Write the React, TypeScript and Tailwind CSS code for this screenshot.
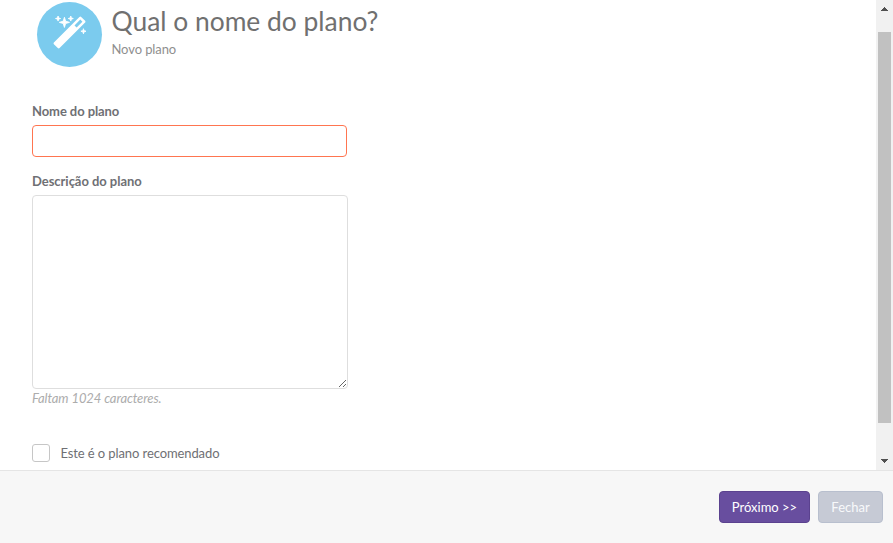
import { useState } from 'react';

const MAX_LENGTH = 1024;

function MagicIcon() {
  return (
    <svg viewBox="0 0 1664 1664" className="w-[33px] h-[33px] fill-white">
      <g transform="translate(0 1536) scale(1 -1)">
        <path d="M1190 955l293 293l-107 107l-293 -293zM1637 1248q0 -27 -18 -45l-1286 -1286q-18 -18 -45 -18t-45 18l-198 198q-18 18 -18 45t18 45l1286 1286q18 18 45 18t45 -18l198 -198q18 -18 18 -45z" />
        <path
          className="stroke-white stroke-[44]"
          d="M286 1438l98 -30l-98 -30l-30 -98l-30 98l-98 30l98 30l30 98zM636 1276l196 -60l-196 -60l-60 -196l-60 196l-196 60l196 60l60 196zM1566 798l98 -30l-98 -30l-30 -98l-30 98l-98 30l98 30l30 98zM926 1438l98 -30l-98 -30l-30 -98l-30 98l-98 30l98 30l30 98z"
        />
      </g>
    </svg>
  );
}

function Scrollbar() {
  return (
    <div className="w-[17px] h-full bg-[#f1f1f1] flex flex-col items-center shrink-0">
      <svg viewBox="0 0 7 4" className="w-[7px] h-1 mt-[7px] fill-[#505050]" shapeRendering="crispEdges">
        <path d="M3 0h1v1h1v1h1v1h1v1H0V3h1V2h1V1h1z" />
      </svg>
      <div className="w-[13px] h-[391px] mt-[21px] bg-[#c1c1c1]" />
      <svg viewBox="0 0 7 4" className="w-[7px] h-1 mt-9 fill-[#505050]" shapeRendering="crispEdges">
        <path d="M0 0h7v1H6v1H5v1H4v1H3V3H2V2H1V1H0z" />
      </svg>
    </div>
  );
}

export default function App() {
  const [name, setName] = useState('');
  const [description, setDescription] = useState('');
  const [recommended, setRecommended] = useState(false);

  return (
    <div className="w-[893px] h-[543px] flex flex-col overflow-hidden bg-white font-['Lato',sans-serif] text-[13px] text-[#6f7074]">
      <div className="h-[470px] flex shrink-0">
        <div className="flex-1 pl-8 overflow-hidden">
          <div className="flex pl-[5px] pt-0.5">
            <div className="w-[65px] h-[65px] rounded-full bg-[#7bcbee] flex items-center justify-center shrink-0">
              <div className="-mt-1">
                <MagicIcon />
              </div>
            </div>
            <div className="ml-[9.5px]">
              <h1 className="text-[26.4px] leading-[38px] text-[#707070]">Qual o nome do plano?</h1>
              <p className="leading-[18px] tracking-[-0.1px] text-[#8f8f8f]">Novo plano</p>
            </div>
          </div>

          <form className="mt-[35px] flex flex-col items-start">
            <label htmlFor="name" className="font-bold leading-[18px] tracking-[-0.08px]">Nome do plano</label>
            <input
              id="name"
              value={name}
              onChange={(e) => setName(e.target.value)}
              className="w-[315px] h-8 mt-[5px] px-3 border border-[#ff7550] rounded outline-none"
            />

            <label htmlFor="description" className="font-bold leading-[18px] tracking-[-0.04px] mt-[15px]">Descrição do plano</label>
            <textarea
              id="description"
              value={description}
              maxLength={MAX_LENGTH}
              onChange={(e) => setDescription(e.target.value)}
              className="w-[316px] h-[194px] mt-[5px] px-3 py-2 border border-[#dedede] rounded outline-none"
            />
            <span className="italic leading-[18px] tracking-[-0.1px] text-[#acacac]">
              Faltam {MAX_LENGTH - description.length} caracteres.
            </span>

            <label className="flex items-center mt-[37px] cursor-pointer">
              <input
                type="checkbox"
                checked={recommended}
                onChange={(e) => setRecommended(e.target.checked)}
                className="appearance-none w-[18px] h-[18px] border border-[#c6c6c6] rounded-[3px] checked:bg-[#684e9f]"
              />
              <span className="ml-[10.5px] leading-[18px] tracking-[-0.1px]">Este é o plano recomendado</span>
            </label>
          </form>
        </div>
        <Scrollbar />
      </div>

      <div className="flex-1 flex items-start justify-end gap-2 pt-5 pr-[10px] bg-[#f7f7f7] border-t border-[#e5e5e5]">
        <button className="w-[91px] h-8 pt-0.5 rounded border border-[#5b428f] bg-[#684e9f] text-white">
          Próximo &gt;&gt;
        </button>
        <button disabled className="w-[65px] h-8 pt-0.5 rounded border border-[#b8bfce] bg-[#c6cad5] text-[#f8f9fb]">
          Fechar
        </button>
      </div>
    </div>
  );
}
